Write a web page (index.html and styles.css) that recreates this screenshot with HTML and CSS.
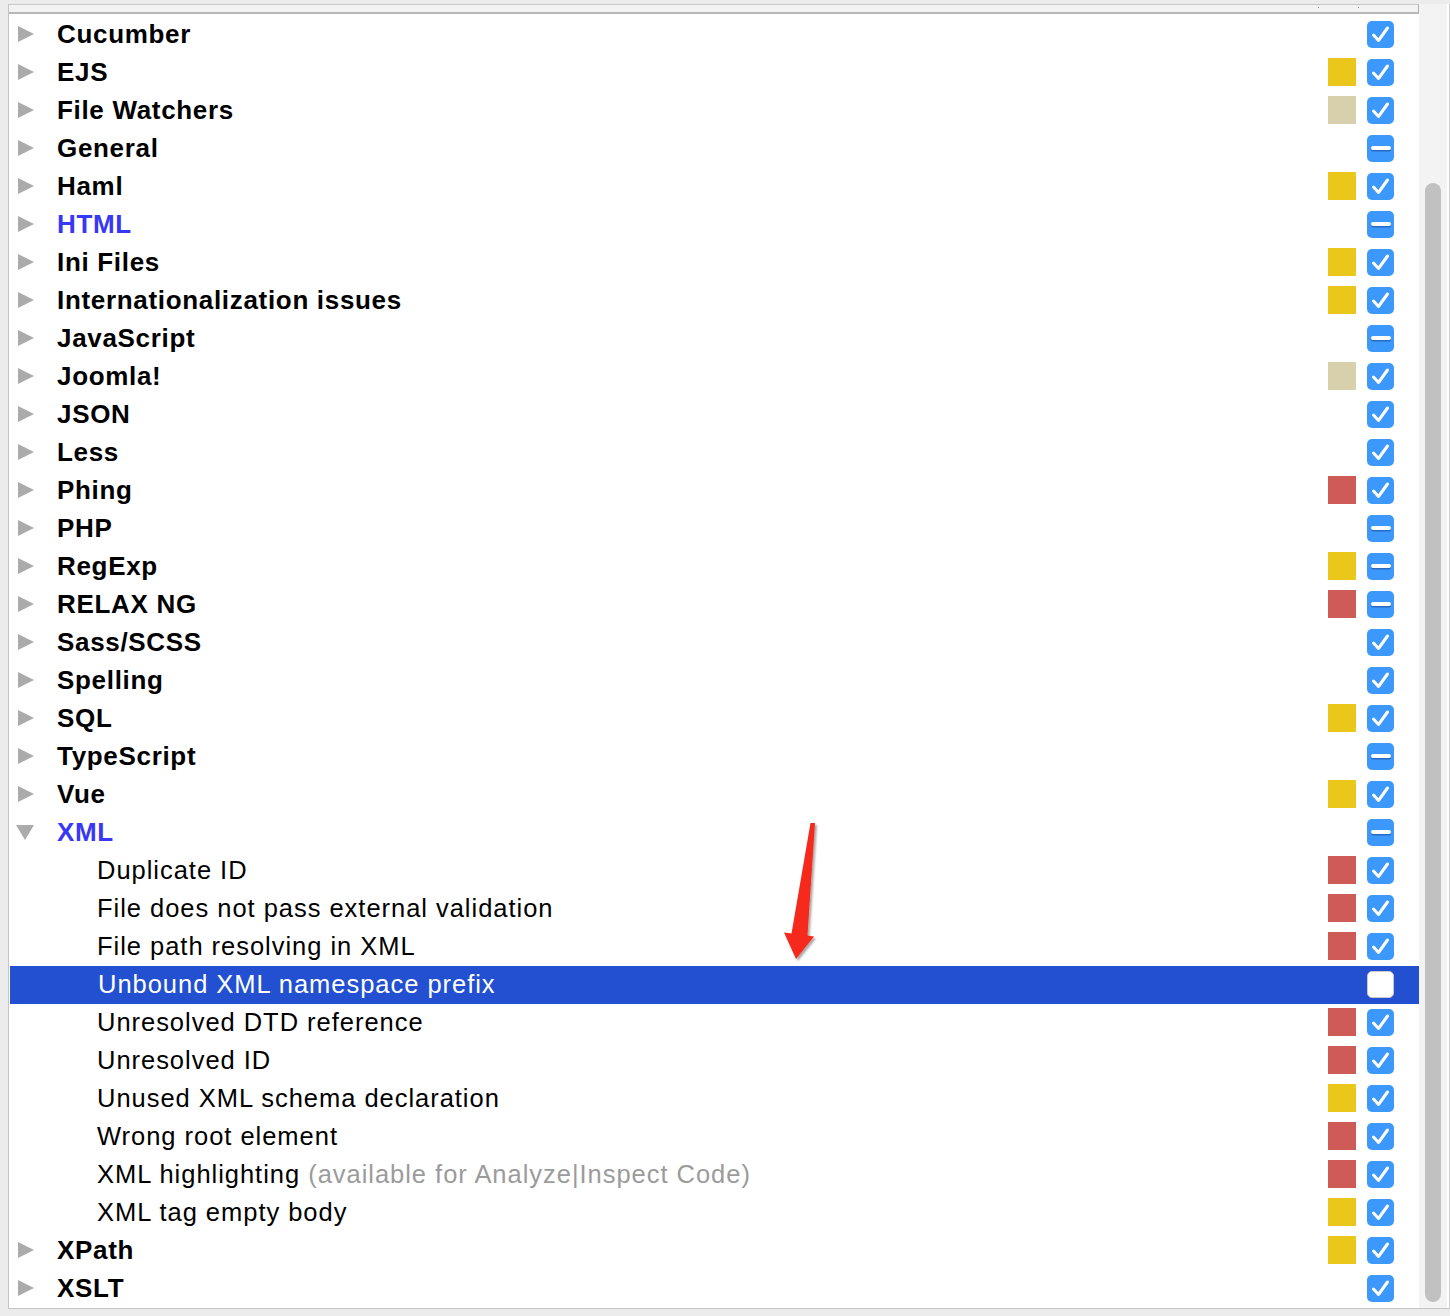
FILE: index.html
```html
<!DOCTYPE html>
<html>
<head>
<meta charset="utf-8">
<link rel="stylesheet" href="styles.css">
</head>
<body>
<div class="panel">
  <div class="main">
    <div class="header"><span class="tick t1"></span><span class="tick t2"></span></div>
    <div class="list">
      <div class="row"><span class="tri"></span><span class="label">Cucumber</span><span class="sev"></span><span class="cb on"><svg viewBox="0 0 27 27"><path d="M6.5 14 L11.5 19.5 L20.5 7"/></svg></span></div>
      <div class="row"><span class="tri"></span><span class="label">EJS</span><span class="sev yellow"></span><span class="cb on"><svg viewBox="0 0 27 27"><path d="M6.5 14 L11.5 19.5 L20.5 7"/></svg></span></div>
      <div class="row"><span class="tri"></span><span class="label">File Watchers</span><span class="sev beige"></span><span class="cb on"><svg viewBox="0 0 27 27"><path d="M6.5 14 L11.5 19.5 L20.5 7"/></svg></span></div>
      <div class="row"><span class="tri"></span><span class="label">General</span><span class="sev"></span><span class="cb mixed"></span></div>
      <div class="row"><span class="tri"></span><span class="label">Haml</span><span class="sev yellow"></span><span class="cb on"><svg viewBox="0 0 27 27"><path d="M6.5 14 L11.5 19.5 L20.5 7"/></svg></span></div>
      <div class="row"><span class="tri"></span><span class="label blue">HTML</span><span class="sev"></span><span class="cb mixed"></span></div>
      <div class="row"><span class="tri"></span><span class="label">Ini Files</span><span class="sev yellow"></span><span class="cb on"><svg viewBox="0 0 27 27"><path d="M6.5 14 L11.5 19.5 L20.5 7"/></svg></span></div>
      <div class="row"><span class="tri"></span><span class="label">Internationalization issues</span><span class="sev yellow"></span><span class="cb on"><svg viewBox="0 0 27 27"><path d="M6.5 14 L11.5 19.5 L20.5 7"/></svg></span></div>
      <div class="row"><span class="tri"></span><span class="label">JavaScript</span><span class="sev"></span><span class="cb mixed"></span></div>
      <div class="row"><span class="tri"></span><span class="label">Joomla!</span><span class="sev beige"></span><span class="cb on"><svg viewBox="0 0 27 27"><path d="M6.5 14 L11.5 19.5 L20.5 7"/></svg></span></div>
      <div class="row"><span class="tri"></span><span class="label">JSON</span><span class="sev"></span><span class="cb on"><svg viewBox="0 0 27 27"><path d="M6.5 14 L11.5 19.5 L20.5 7"/></svg></span></div>
      <div class="row"><span class="tri"></span><span class="label">Less</span><span class="sev"></span><span class="cb on"><svg viewBox="0 0 27 27"><path d="M6.5 14 L11.5 19.5 L20.5 7"/></svg></span></div>
      <div class="row"><span class="tri"></span><span class="label">Phing</span><span class="sev red"></span><span class="cb on"><svg viewBox="0 0 27 27"><path d="M6.5 14 L11.5 19.5 L20.5 7"/></svg></span></div>
      <div class="row"><span class="tri"></span><span class="label">PHP</span><span class="sev"></span><span class="cb mixed"></span></div>
      <div class="row"><span class="tri"></span><span class="label">RegExp</span><span class="sev yellow"></span><span class="cb mixed"></span></div>
      <div class="row"><span class="tri"></span><span class="label">RELAX NG</span><span class="sev red"></span><span class="cb mixed"></span></div>
      <div class="row"><span class="tri"></span><span class="label">Sass/SCSS</span><span class="sev"></span><span class="cb on"><svg viewBox="0 0 27 27"><path d="M6.5 14 L11.5 19.5 L20.5 7"/></svg></span></div>
      <div class="row"><span class="tri"></span><span class="label">Spelling</span><span class="sev"></span><span class="cb on"><svg viewBox="0 0 27 27"><path d="M6.5 14 L11.5 19.5 L20.5 7"/></svg></span></div>
      <div class="row"><span class="tri"></span><span class="label">SQL</span><span class="sev yellow"></span><span class="cb on"><svg viewBox="0 0 27 27"><path d="M6.5 14 L11.5 19.5 L20.5 7"/></svg></span></div>
      <div class="row"><span class="tri"></span><span class="label">TypeScript</span><span class="sev"></span><span class="cb mixed"></span></div>
      <div class="row"><span class="tri"></span><span class="label">Vue</span><span class="sev yellow"></span><span class="cb on"><svg viewBox="0 0 27 27"><path d="M6.5 14 L11.5 19.5 L20.5 7"/></svg></span></div>
      <div class="row"><span class="tri down"></span><span class="label blue">XML</span><span class="sev"></span><span class="cb mixed"></span></div>
      <div class="row child"><span class="item">Duplicate ID</span><span class="sev red"></span><span class="cb on"><svg viewBox="0 0 27 27"><path d="M6.5 14 L11.5 19.5 L20.5 7"/></svg></span></div>
      <div class="row child"><span class="item">File does not pass external validation</span><span class="sev red"></span><span class="cb on"><svg viewBox="0 0 27 27"><path d="M6.5 14 L11.5 19.5 L20.5 7"/></svg></span></div>
      <div class="row child"><span class="item">File path resolving in XML</span><span class="sev red"></span><span class="cb on"><svg viewBox="0 0 27 27"><path d="M6.5 14 L11.5 19.5 L20.5 7"/></svg></span></div>
      <div class="row child selected"><span class="item">Unbound XML namespace prefix</span><span class="sev"></span><span class="cb off"></span></div>
      <div class="row child"><span class="item">Unresolved DTD reference</span><span class="sev red"></span><span class="cb on"><svg viewBox="0 0 27 27"><path d="M6.5 14 L11.5 19.5 L20.5 7"/></svg></span></div>
      <div class="row child"><span class="item">Unresolved ID</span><span class="sev red"></span><span class="cb on"><svg viewBox="0 0 27 27"><path d="M6.5 14 L11.5 19.5 L20.5 7"/></svg></span></div>
      <div class="row child"><span class="item">Unused XML schema declaration</span><span class="sev yellow"></span><span class="cb on"><svg viewBox="0 0 27 27"><path d="M6.5 14 L11.5 19.5 L20.5 7"/></svg></span></div>
      <div class="row child"><span class="item">Wrong root element</span><span class="sev red"></span><span class="cb on"><svg viewBox="0 0 27 27"><path d="M6.5 14 L11.5 19.5 L20.5 7"/></svg></span></div>
      <div class="row child"><span class="item">XML highlighting <span class="hint">(available for Analyze|Inspect Code)</span></span><span class="sev red"></span><span class="cb on"><svg viewBox="0 0 27 27"><path d="M6.5 14 L11.5 19.5 L20.5 7"/></svg></span></div>
      <div class="row child"><span class="item">XML tag empty body</span><span class="sev yellow"></span><span class="cb on"><svg viewBox="0 0 27 27"><path d="M6.5 14 L11.5 19.5 L20.5 7"/></svg></span></div>
      <div class="row"><span class="tri"></span><span class="label">XPath</span><span class="sev yellow"></span><span class="cb on"><svg viewBox="0 0 27 27"><path d="M6.5 14 L11.5 19.5 L20.5 7"/></svg></span></div>
      <div class="row"><span class="tri"></span><span class="label">XSLT</span><span class="sev"></span><span class="cb on"><svg viewBox="0 0 27 27"><path d="M6.5 14 L11.5 19.5 L20.5 7"/></svg></span></div>
    </div>
  </div>
  <div class="scroll"><div class="thumb"></div></div>
</div>
<svg class="arrow" width="60" height="160" viewBox="770 815 60 160">
  <defs>
    <filter id="sh" x="-50%" y="-20%" width="200%" height="140%">
      <feDropShadow dx="2" dy="2" stdDeviation="1.2" flood-color="#000" flood-opacity="0.35"/>
    </filter>
  </defs>
  <polygon filter="url(#sh)" fill="#f52a1a" points="810.5,823 815,823 807.5,935.5 814,936.5 796,959 784,932.5 791.5,933.5"/>
</svg>
</body>
</html>
```

FILE: styles.css
```css
html, body {
  margin: 0;
  padding: 0;
}
body {
  background: #ececec;
  width: 1450px;
  height: 1316px;
  position: relative;
  font-family: "Liberation Sans", Arial, sans-serif;
}
.panel {
  margin: 4px 0 0 8px;
  width: 1440px;
  height: 1304px;
  display: flex;
  border-left: 1px solid #c4c4c4;
  border-bottom: 1px solid #c4c4c4;
  border-right: 1px solid #cfcfcf;
  background: #fff;
}
.main {
  width: 1410px;
  display: flex;
  flex-direction: column;
}
.header {
  height: 7px;
  border-top: 1px solid #c8c8c8;
  border-bottom: 2px solid #b8b8b8;
  border-right: 1px solid #b0b0b0;
  background: #f3f3f3;
  position: relative;
}
.tick {
  position: absolute;
  top: 2px;
  width: 1px;
  height: 1px;
  background: #888;
}
.t1 { left: 1309px; }
.t2 { left: 1349px; }
.list {
  padding-top: 2px;
  display: flex;
  flex-direction: column;
}
.row {
  height: 38px;
  box-sizing: border-box;
  display: flex;
  align-items: center;
  padding-left: 9px;
  padding-right: 25px;
  padding-bottom: 2px;
  color: #000;
}
.tri {
  width: 0;
  height: 0;
  border-top: 8px solid transparent;
  border-bottom: 8px solid transparent;
  border-left: 16px solid #ababab;
  margin-right: 23px;
  margin-left: 0;
}
.tri.down {
  border-left: 9px solid transparent;
  border-right: 9px solid transparent;
  border-top: 15px solid #ababab;
  border-bottom: 0;
  margin-left: -2px;
  margin-right: 23px;
}
.label {
  font-weight: bold;
  font-size: 26px;
  letter-spacing: 0.68px;
  flex: 1;
  white-space: nowrap;
}
.label.blue { color: #3737f6; }
.row.child { padding-left: 88px; }
.item {
  font-size: 25.5px;
  letter-spacing: 0.97px;
  flex: 1;
  white-space: nowrap;
}
.hint { color: #9b9b9b; }
.selected {
  background: #2350d1;
  color: #fff;
  margin-left: 1px;
  padding-left: 87px;
}
.sev {
  width: 28px;
  height: 28px;
  margin-right: 11px;
  flex: none;
}
.sev.yellow { background: #ebc71b; }
.sev.beige { background: #d8cfad; }
.sev.red { background: #ce5b55; }
.cb {
  width: 27px;
  height: 27px;
  border-radius: 5px;
  flex: none;
  box-sizing: border-box;
  position: relative;
}
.cb.on, .cb.mixed { background: #3c98fa; }
.cb svg {
  display: block;
  width: 27px;
  height: 27px;
}
.cb svg path {
  fill: none;
  stroke: #fff;
  stroke-width: 3;
  stroke-linecap: round;
  stroke-linejoin: round;
}
.cb.mixed::after {
  content: "";
  position: absolute;
  left: 3.5px;
  top: 11.5px;
  width: 20px;
  height: 3.5px;
  background: #fff;
  border-radius: 2px;
  box-shadow: 0 1.5px 0 #2a6bc2;
}
.cb.off {
  background: #fff;
  border: 1px solid #c9c9c9;
}
.scroll {
  width: 28px;
  background: #f3f3f3;
  position: relative;
  display: flex;
  justify-content: center;
  padding-top: 179px;
  padding-bottom: 6px;
  box-sizing: border-box;
}
.thumb {
  width: 16px;
  height: 1119px;
  background: #c1c1c1;
  border-radius: 8px;
}
.arrow {
  position: absolute;
  left: 770px;
  top: 815px;
}
```
